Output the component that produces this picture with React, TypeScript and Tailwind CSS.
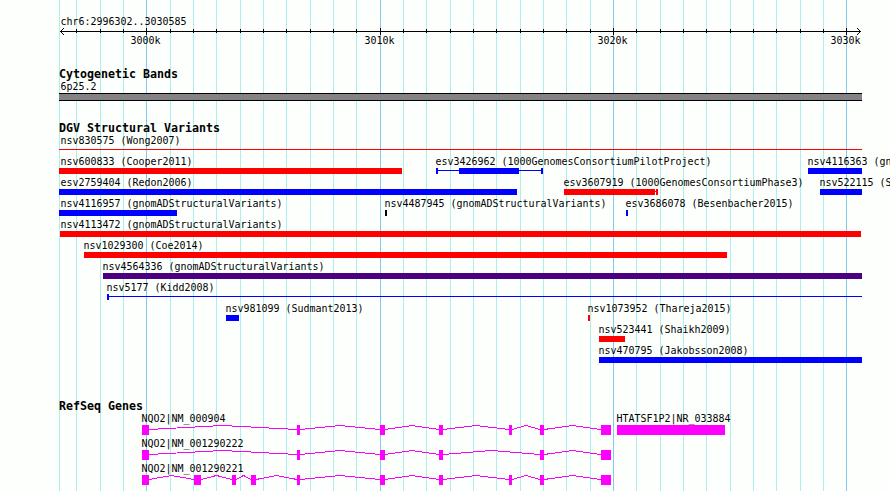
import React from "react";

const RED = "#ff0000";
const BLUE = "#0000ff";
const INDIGO = "#4b0082";
const MAGENTA = "#ff00ff";
const LEFT = 59;
const RIGHT = 862;

// Thin guide lines every 1 kb; every tenth one is a major line.
const gridLines = Array.from({ length: 34 }, (_, i) => ({
  x: Math.floor(76.7 + (i * 70) / 3),
  major: i % 10 === 3,
}));

function Label({ x, y, children }: { x: number; y: number; children: string }) {
  return (
    <text
      x={x - 0.5}
      y={y}
      textLength={children.length * 6}
      lengthAdjust="spacingAndGlyphs"
      className="fill-black font-['DejaVu_Sans_Mono','Liberation_Mono',monospace] text-[11px]"
    >
      {children}
    </text>
  );
}

function Track({ top, height, children }: { top: number; height: number; children: React.ReactNode }) {
  return (
    <svg
      className="block w-[890px] shrink-0"
      height={height}
      viewBox={`0 ${top} 890 ${height}`}
      shapeRendering="crispEdges"
    >
      {children}
    </svg>
  );
}

function Title({ children }: { children: string }) {
  return (
    <h2 className="h-[14px] shrink-0 pl-[59px] font-['DejaVu_Sans_Mono','Liberation_Mono',monospace] text-[11.63px] leading-[14px] font-bold whitespace-pre text-black">
      {children}
    </h2>
  );
}

function Bar({ x, end, y, h = 6, color }: { x: number; end: number; y: number; h?: number; color: string }) {
  return <rect x={x} y={y} width={end - x} height={h} fill={color} />;
}

type Variant = { label: string; row: number; x: number; end: number; color: string; labelX?: number };

const variants: Variant[] = [
  { label: "nsv600833 (Cooper2011)", row: 0, x: 59, end: 402, color: RED, labelX: 61 },
  { label: "nsv4116363 (gnomADStructuralVariants)", row: 0, x: 808, end: RIGHT, color: BLUE },
  { label: "esv2759404 (Redon2006)", row: 1, x: 59, end: 517, color: BLUE, labelX: 61 },
  { label: "esv3607919 (1000GenomesConsortiumPhase3)", row: 1, x: 564, end: 655, color: RED },
  { label: "nsv522115 (Shaikh2009)", row: 1, x: 820, end: RIGHT, color: BLUE },
  { label: "nsv4116957 (gnomADStructuralVariants)", row: 2, x: 59, end: 177, color: BLUE, labelX: 61 },
  { label: "nsv4487945 (gnomADStructuralVariants)", row: 2, x: 385, end: 387, color: "#000000" },
  { label: "esv3686078 (Besenbacher2015)", row: 2, x: 626, end: 628, color: BLUE },
  { label: "nsv4113472 (gnomADStructuralVariants)", row: 3, x: 60, end: 861, color: RED, labelX: 61 },
  { label: "nsv1029300 (Coe2014)", row: 4, x: 84, end: 727, color: RED },
  { label: "nsv4564336 (gnomADStructuralVariants)", row: 5, x: 103, end: RIGHT, color: INDIGO },
  { label: "nsv981099 (Sudmant2013)", row: 7, x: 226, end: 239, color: BLUE },
  { label: "nsv1073952 (Thareja2015)", row: 7, x: 588, end: 590, color: RED },
  { label: "nsv523441 (Shaikh2009)", row: 8, x: 599, end: 625, color: RED },
  { label: "nsv470795 (Jakobsson2008)", row: 9, x: 599, end: RIGHT, color: BLUE },
];

type Exon = [number, number];
const genes: { label: string; y: number; exons: Exon[] }[] = [
  {
    label: "NQO2|NM_000904",
    y: 425,
    exons: [[142, 149], [297, 300], [380, 385], [439, 443], [509, 512], [540, 544], [601, 611]],
  },
  { label: "HTATSF1P2|NR_033884", y: 425, exons: [[617, 725]] },
  {
    label: "NQO2|NM_001290222",
    y: 450,
    exons: [[142, 149], [297, 300], [380, 385], [439, 443], [540, 544], [601, 611]],
  },
  {
    label: "NQO2|NM_001290221",
    y: 475,
    exons: [
      [142, 149], [194, 201], [232, 236], [251, 256], [297, 300],
      [380, 385], [439, 443], [509, 512], [540, 544], [601, 611],
    ],
  },
];

function Gene({ label, y, exons }: { label: string; y: number; exons: Exon[] }) {
  return (
    <g>
      <Label x={exons[0][0]} y={y - 3}>{label}</Label>
      {exons.slice(1).map(([start], i) => {
        const from = exons[i][1];
        return (
          <polyline
            key={start}
            points={`${from},${y + 4.5} ${(from + start) / 2},${y + 0.5} ${start},${y + 4.5}`}
            fill="none"
            stroke={MAGENTA}
          />
        );
      })}
      {exons.map(([start, end]) => (
        <Bar key={start} x={start} end={end} y={y} h={10} color={MAGENTA} />
      ))}
    </g>
  );
}

export default function App() {
  return (
    <main className="relative h-[491px] w-[890px] overflow-hidden bg-[#fdfffc]">
      <svg className="absolute inset-0" width="890" height="491" shapeRendering="crispEdges">
        <rect x={LEFT} y={0} width={1} height={491} fill="#acefeb" />
        {gridLines.map(({ x, major }) => (
          <rect key={x} x={x} y={0} width={1} height={491} fill={major ? "#84caec" : "#acefeb"} />
        ))}
      </svg>

      <div className="relative flex flex-col">
        <Track top={0} height={67}>
          <Label x={61} y={25}>chr6:2996302..3030585</Label>
          <rect x={60} y={31} width={801} height={1} />
          {[1, 2, 3].map((d) => (
            <g key={d}>
              <rect x={60 + d} y={31 - d} width={1} height={1} />
              <rect x={60 + d} y={31 + d} width={1} height={1} />
              <rect x={860 - d} y={31 - d} width={1} height={1} />
              <rect x={860 - d} y={31 + d} width={1} height={1} />
            </g>
          ))}
          {gridLines.map(({ x, major }) => (
            <rect key={x} x={x} y={major ? 28 : 29} width={1} height={major ? 7 : 4} />
          ))}
          <Label x={131} y={44}>3000k</Label>
          <Label x={365} y={44}>3010k</Label>
          <Label x={598} y={44}>3020k</Label>
          <Label x={831} y={44}>3030k</Label>
        </Track>

        <Title>Cytogenetic Bands</Title>
        <Track top={81} height={40}>
          <Label x={61} y={90}>6p25.2</Label>
          <Bar x={LEFT} end={RIGHT} y={93} h={8} color="#000000" />
          <Bar x={LEFT} end={RIGHT} y={94} color="#848284" />
        </Track>

        <Title>DGV Structural Variants</Title>
        <Track top={135} height={264}>
          <Label x={61} y={144}>nsv830575 (Wong2007)</Label>
          <Bar x={LEFT} end={RIGHT} y={149} h={1} color={RED} />
          {variants.map((v) => (
            <g key={v.label + v.x}>
              <Label x={v.labelX ?? v.x} y={165 + v.row * 21}>{v.label}</Label>
              <Bar x={v.x} end={v.end} y={168 + v.row * 21} color={v.color} />
            </g>
          ))}
          <Label x={436} y={165}>esv3426962 (1000GenomesConsortiumPilotProject)</Label>
          <Bar x={436} end={438} y={168} color={BLUE} />
          <Bar x={436} end={543} y={170} h={1} color={BLUE} />
          <Bar x={459} end={519} y={168} color={BLUE} />
          <Bar x={541} end={543} y={168} color={BLUE} />
          <Bar x={655} end={656} y={191} h={1} color={RED} />
          <Bar x={656} end={658} y={189} color={RED} />
          <Label x={107} y={291}>nsv5177 (Kidd2008)</Label>
          <Bar x={107} end={109} y={294} color={BLUE} />
          <Bar x={107} end={RIGHT} y={296} h={1} color={BLUE} />
        </Track>

        <Title>RefSeq Genes</Title>
        <Track top={413} height={78}>
          {genes.map((g) => (
            <Gene key={g.label} {...g} />
          ))}
        </Track>
      </div>
    </main>
  );
}
